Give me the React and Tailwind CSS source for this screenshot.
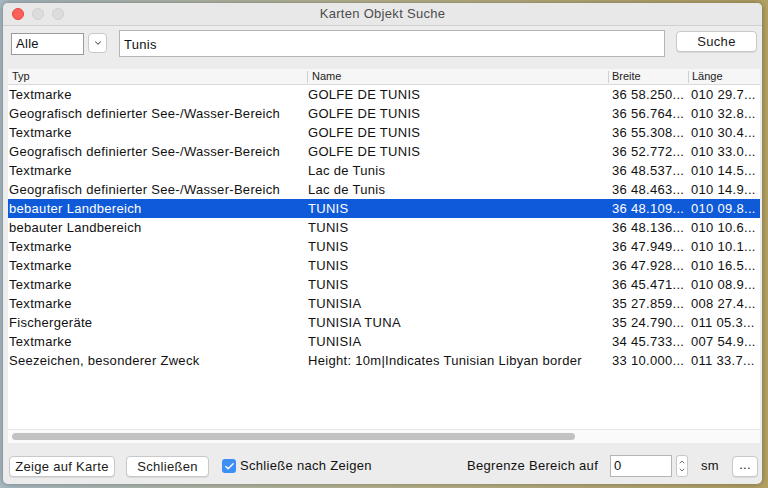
import { Check, ChevronDown, ChevronUp } from "lucide-react";

const rows = [
  ["Textmarke", "GOLFE DE TUNIS", "36 58.250...", "010 29.7..."],
  ["Geografisch definierter See-/Wasser-Bereich", "GOLFE DE TUNIS", "36 56.764...", "010 32.8..."],
  ["Textmarke", "GOLFE DE TUNIS", "36 55.308...", "010 30.4..."],
  ["Geografisch definierter See-/Wasser-Bereich", "GOLFE DE TUNIS", "36 52.772...", "010 33.0..."],
  ["Textmarke", "Lac de Tunis", "36 48.537...", "010 14.5..."],
  ["Geografisch definierter See-/Wasser-Bereich", "Lac de Tunis", "36 48.463...", "010 14.9..."],
  ["bebauter Landbereich", "TUNIS", "36 48.109...", "010 09.8..."],
  ["bebauter Landbereich", "TUNIS", "36 48.136...", "010 10.6..."],
  ["Textmarke", "TUNIS", "36 47.949...", "010 10.1..."],
  ["Textmarke", "TUNIS", "36 47.928...", "010 16.5..."],
  ["Textmarke", "TUNIS", "36 45.471...", "010 08.9..."],
  ["Textmarke", "TUNISIA", "35 27.859...", "008 27.4..."],
  ["Fischergeräte", "TUNISIA TUNA", "35 24.790...", "011 05.3..."],
  ["Textmarke", "TUNISIA", "34 45.733...", "007 54.9..."],
  ["Seezeichen, besonderer Zweck", "Height: 10m|Indicates Tunisian Libyan border", "33 10.000...", "011 33.7..."],
];

function Btn({ children, className = "" }) {
  return (
    <button
      className={`h-[21px] rounded-[4px] border border-[#c8c8c8] bg-white text-[13px] leading-none tracking-[0.3px] text-[#1a1a1a] shadow-[0_1px_0_rgba(0,0,0,0.08)] ${className}`}
    >
      {children}
    </button>
  );
}

export default function App() {
  return (
    <div
      className="h-[488px] w-[768px] overflow-hidden bg-gradient-to-r from-[#a9bac3] via-[#b9b48e] to-[#b3a164] pl-[3px] pt-[3px] text-[13px] tracking-[0.3px] text-[#111]"
      style={{ fontFamily: '"Helvetica Neue", "Liberation Sans", Arial, sans-serif' }}
    >
      <div className="flex h-[481px] w-[759px] flex-col overflow-hidden rounded-[5px] bg-[#ececec] shadow-[0_0_6px_rgba(0,0,0,0.35)]">
        {/* title bar */}
        <div className="relative flex h-[23px] shrink-0 items-center border-b border-[#d0d0d0] bg-[#e8e8e8]">
          <div className="flex gap-[8px] pl-[9px]">
            <span className="h-[12px] w-[12px] rounded-full border border-[#e2463f] bg-[#fc605b]" />
            <span className="h-[12px] w-[12px] rounded-full border border-[#cfcfcf] bg-[#dcdcdc]" />
            <span className="h-[12px] w-[12px] rounded-full border border-[#cfcfcf] bg-[#dcdcdc]" />
          </div>
          <div className="absolute inset-0 flex items-center justify-center text-[13px] text-[#4d4d4d]">
            Karten Objekt Suche
          </div>
        </div>

        {/* search row */}
        <div className="flex h-[41px] shrink-0 items-start pl-[8px]">
          <div className="mt-[7px] flex h-[22px] w-[73px] items-center border border-[#9a9a9a] bg-white pl-[4px] text-[13px]">
            Alle
          </div>
          <button className="ml-[4px] mt-[7px] flex h-[20px] w-[19px] items-center justify-center rounded-[4px] border border-[#c8c8c8] bg-white">
            <ChevronDown size={10} strokeWidth={2.5} className="text-[#555]" />
          </button>
          <div className="ml-[12px] mt-[4px] flex h-[27px] w-[546px] items-start border border-[#b5b5b5] bg-white pl-[4px] pt-[4px] text-[13px]">
            Tunis
          </div>
          <Btn className="ml-[11px] mt-[5px] w-[81px]">Suche</Btn>
        </div>

        {/* table */}
        <div className="ml-[5px] mt-[2px] flex h-[374px] w-[752px] flex-col bg-white">
          <div className="flex h-[16px] shrink-0 items-center border-b border-[#dadada] bg-[#f6f6f6] text-[11px] tracking-normal text-[#222]">
            <div className="w-[299px] pl-[4px]">Typ</div>
            <div className="h-[12px] border-l border-[#d0d0d0]" />
            <div className="w-[300px] pl-[4px]">Name</div>
            <div className="h-[12px] border-l border-[#d0d0d0]" />
            <div className="w-[79px] pl-[3px]">Breite</div>
            <div className="h-[12px] border-l border-[#d0d0d0]" />
            <div className="pl-[3px]">Länge</div>
          </div>
          <div className="flex-1">
            {rows.map((r, i) => {
              const sel = i === 6;
              return (
                <div
                  key={i}
                  className={`flex h-[19px] items-center whitespace-nowrap text-[13px] ${
                    sel ? "bg-[#0f5ad8] text-white" : "text-[#111]"
                  }`}
                >
                  <div className="w-[300px] overflow-hidden pl-[1px]">{r[0]}</div>
                  <div className="w-[304px] overflow-hidden">{r[1]}</div>
                  <div className="w-[79px] overflow-hidden">{r[2]}</div>
                  <div className="overflow-hidden">{r[3]}</div>
                </div>
              );
            })}
          </div>
          <div className="flex h-[14px] shrink-0 items-center border-t border-[#e6e6e6] bg-[#fafafa] pl-[4px]">
            <div className="h-[7px] w-[563px] rounded-full bg-[#c2c2c2]" />
          </div>
        </div>

        {/* bottom bar */}
        <div className="flex flex-1 items-center pl-[6px] pr-[4px] pt-[5px]">
          <Btn className="w-[106px]">Zeige auf Karte</Btn>
          <Btn className="ml-[11px] w-[83px]">Schließen</Btn>
          <span className="ml-[13px] flex h-[14px] w-[14px] items-center justify-center rounded-[3px] bg-[#3d8ff5]">
            <Check size={11} strokeWidth={3} className="text-white" />
          </span>
          <span className="ml-[4px]">Schließe nach Zeigen</span>
          <span className="ml-auto">Begrenze Bereich auf</span>
          <div className="ml-[12px] flex h-[22px] w-[62px] items-center border border-[#b5b5b5] bg-white pl-[3px]">
            0
          </div>
          <div className="ml-[4px] flex h-[22px] w-[12px] flex-col items-center justify-center rounded-[3px] border border-[#c8c8c8] bg-white">
            <ChevronUp size={8} strokeWidth={2.5} className="text-[#555]" />
            <ChevronDown size={8} strokeWidth={2.5} className="text-[#555]" />
          </div>
          <span className="ml-[13px]">sm</span>
          <Btn className="ml-[13px] w-[26px] pb-[4px]">...</Btn>
        </div>
      </div>
    </div>
  );
}
